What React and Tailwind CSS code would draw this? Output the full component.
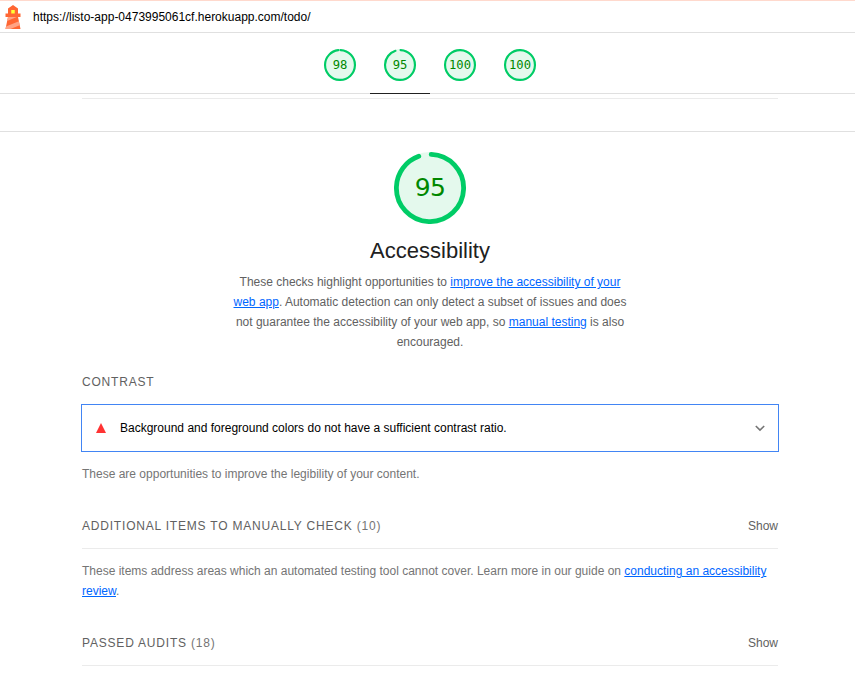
const RADIUS = 56;
const STROKE = 8;
const CIRCUMFERENCE = 2 * Math.PI * RADIUS;

function Gauge({ score, large = false }) {
  const arc = score === 100 ? CIRCUMFERENCE : (score / 100) * CIRCUMFERENCE - STROKE / 2;
  const rotation = -90 + (0.25 * STROKE * 360) / CIRCUMFERENCE;
  return (
    <div className={`grid place-items-center ${large ? "size-[72px]" : "size-8"}`}>
      <svg viewBox="0 0 120 120" className="col-start-1 row-start-1 size-full">
        <circle cx="60" cy="60" r="56" fill="#e4f9ed" stroke="#e4f9ed" strokeWidth="8" />
        <circle
          cx="60"
          cy="60"
          r="56"
          fill="none"
          stroke="#00cc66"
          strokeWidth="8"
          strokeLinecap="round"
          strokeDasharray={`${arc} ${CIRCUMFERENCE}`}
          transform={`rotate(${rotation} 60 60)`}
        />
      </svg>
      <span
        className={`col-start-1 row-start-1 text-[#008800] ${
          large
            ? "font-['DejaVu_Sans',sans-serif] text-[25px] leading-[30px] tracking-[-0.6px]"
            : "font-['DejaVu_Sans_Mono',monospace] text-[12.18px] leading-4"
        }`}
      >
        {score}
      </span>
    </div>
  );
}

function Link({ children }) {
  return <a className="text-[#0066ff] underline">{children}</a>;
}

function Logo() {
  return (
    <svg viewBox="0 0 48 48" className="size-6">
      <path d="m14 7 10-7 10 7v10h5v7h-5l5 24H9l5-24H9v-7h5V7Z" fill="#ff6633" />
      <path
        d="M31.561 24H14l-1.689 8.105L31.561 24ZM18.983 48H9l1.022-4.907L35.723 32.27l1.663 7.98L18.983 48Z"
        fill="#ffa385"
      />
      <path d="M20.5 10h7v7h-7z" fill="#ffff33" />
    </svg>
  );
}

function ClumpHeader({ title, count }) {
  return (
    <div className="flex h-[46px] items-center justify-between border-b border-[#ebebeb] text-[#616161]">
      <h3 className="tracking-[0.8px] uppercase">
        {title} <span className="text-[#757575]">({count})</span>
      </h3>
      <button className="text-[#616161]">Show</button>
    </div>
  );
}

export default function App() {
  return (
    <div className="h-[677px] overflow-hidden bg-white font-['Liberation_Sans',Arial,sans-serif] text-[12px] leading-5 text-[#212121]">
      <header className="flex h-[33px] items-center gap-2 border-t border-b border-t-[#ffd9cd] border-b-[#e0e0e0] pl-px">
        <Logo />
        <span className="text-black">https://listo-app-0473995061cf.herokuapp.com/todo/</span>
      </header>
      <nav className="flex h-[61px] justify-center border-b border-[#e0e0e0] pl-[5px]">
        {[98, 95, 100, 100].map((score, i) => (
          <div
            key={i}
            className={`flex h-[61px] w-[60px] justify-center pt-4 ${i === 1 ? "border-b border-[#212121]" : ""}`}
          >
            <Gauge score={score} />
          </div>
        ))}
      </nav>
      <div className="h-[38px] border-b border-[#e0e0e0] pt-1">
        <div className="ml-[82px] h-px w-[696px] bg-[#ebebeb]" />
      </div>
      <main className="ml-[82px] w-[696px]">
        <section className="flex flex-col items-center pt-5">
          <Gauge score={95} large />
          <h1 className="mt-3 text-[22px] leading-[30px]">Accessibility</h1>
          <p className="mt-1.5 w-[400px] text-center text-[#616161]">
            These checks highlight opportunities to <Link>improve the accessibility of your web app</Link>. Automatic
            detection can only detect a subset of issues and does not guarantee the accessibility of your web app, so{" "}
            <Link>manual testing</Link> is also encouraged.
          </p>
        </section>
        <h3 className="mt-5 tracking-[0.8px] text-[#616161]">CONTRAST</h3>
        <div className="-mx-px mt-3 flex h-12 items-center border border-[#4285f4] pr-[13px] pl-[14px]">
          <svg viewBox="0 0 10 10" className="size-2.5">
            <path d="M5 0 10 10H0Z" fill="#ff3333" />
          </svg>
          <span className="ml-[14px] grow text-black">
            Background and foreground colors do not have a sufficient contrast ratio.
          </span>
          <svg viewBox="0 0 10 10" className="size-2.5" fill="none" stroke="#757575" strokeWidth="1.6">
            <path d="m.8 3 4.2 4.1L9.2 3" />
          </svg>
        </div>
        <p className="mt-3 text-[#757575]">These are opportunities to improve the legibility of your content.</p>
        <div className="mt-[19px]">
          <ClumpHeader title="Additional items to manually check" count={10} />
        </div>
        <p className="mt-3 text-[#757575]">
          These items address areas which an automated testing tool cannot cover. Learn more in our guide on{" "}
          <Link>conducting an accessibility review</Link>.
        </p>
        <div className="mt-[19px]">
          <ClumpHeader title="Passed audits" count={18} />
        </div>
      </main>
    </div>
  );
}
